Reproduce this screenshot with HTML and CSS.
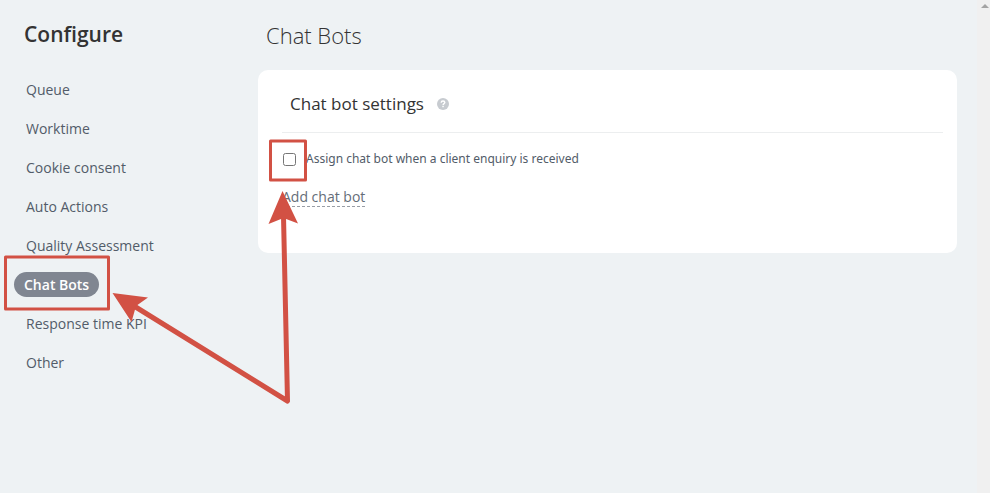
FILE: index.html
```html
<!DOCTYPE html>
<html lang="en">
<head>
<meta charset="utf-8">
<meta name="viewport" content="width=device-width, initial-scale=1">
<title>Configure - Chat Bots</title>
<link rel="stylesheet" href="styles.css">
</head>
<body>
<div class="page">
  <aside class="sidebar">
    <h1 class="sidebar-title">Configure</h1>
    <nav class="menu" aria-label="Configure">
      <a class="menu-item" href="#queue">Queue</a>
      <a class="menu-item" href="#worktime">Worktime</a>
      <a class="menu-item" href="#cookie">Cookie consent</a>
      <a class="menu-item" href="#auto">Auto Actions</a>
      <a class="menu-item" href="#quality">Quality Assessment</a>
      <a class="menu-item menu-item-active" href="#bots" aria-current="page">Chat Bots</a>
      <a class="menu-item" href="#kpi">Response time KPI</a>
      <a class="menu-item" href="#other">Other</a>
    </nav>
  </aside>
  <main class="content">
    <h2 class="content-title">Chat Bots</h2>
    <section class="card">
      <header class="card-header">
        <h3 class="card-title">Chat bot settings</h3>
        <svg class="hint" viewBox="0 0 12 12" aria-hidden="true">
          <circle cx="6" cy="6" r="6" fill="#c7cbd0"/>
          <path d="M4.2 4.7C4.2 3.5 5 3 6 3s1.8.6 1.8 1.6C7.800 5.700 6.100 5.700 6.100 7" fill="none" stroke="#fff" stroke-width="1.400"/>
          <rect x="5.300" y="7.800" width="1.500" height="1.400" fill="#fff"/>
        </svg>
      </header>
      <div class="option">
        <input class="option-box" type="checkbox" id="assign-bot">
        <label class="option-label" for="assign-bot">Assign chat bot when a client enquiry is received</label>
      </div>
      <a class="add-link" href="#add">Add chat bot</a>
    </section>
  </main>
  <div class="scroll-track" aria-hidden="true">
    <svg class="scroll-arrow" viewBox="0 0 8 4"><path d="M0 4L4 0l4 4z" fill="#a3a3a3"/></svg>
  </div>
  <svg class="callouts" viewBox="0 0 320 420" aria-hidden="true">
    <g fill="none" stroke="#d25144" stroke-linejoin="round" stroke-linecap="round">
      <rect x="5.500" y="257" width="103" height="52" stroke-width="3"/>
      <rect x="270.500" y="141" width="35" height="39" stroke-width="3"/>
      <path d="M134 306L287.500 401L283.500 216" stroke-width="5"/>
    </g>
    <path d="M112.500 293L148 297.500L136 306L131.500 322Z" fill="#d25144"/>
    <path d="M282.500 191L298 223.500L283.500 218L268.500 224Z" fill="#d25144"/>
  </svg>
</div>
</body>
</html>
```
FILE: styles.css
```css
* {
  box-sizing: border-box;
}

body {
  margin: 0;
  background: #eef2f4;
  color: #525c69;
  font-family: "Open Sans", "Noto Sans", sans-serif;
  font-size: 14px;
}

h1, h2, h3 {
  margin: 0;
}

.page {
  position: relative;
  display: grid;
  grid-template-columns: 258px minmax(0, 1fr) 13px;
  min-height: 100vh;
}

.sidebar {
  padding: 20px 14px;
}

.sidebar-title {
  padding-left: 10px;
  color: #333;
  font-size: 21px;
  font-weight: 600;
  line-height: 28px;
}

.menu {
  display: flex;
  flex-direction: column;
  align-items: flex-start;
  gap: 14px;
  margin-top: 29px;
}

.menu-item {
  padding: 0 12px;
  color: #525c69;
  line-height: 25px;
  text-decoration: none;
}

.menu-item-active {
  padding: 0 10px;
  border-radius: 13px;
  background: #808691;
  color: #fff;
  font-weight: 600;
}

.content {
  padding: 20px 20px 20px 0;
}

.content-title {
  padding-left: 8px;
  color: #333;
  font-size: 22px;
  font-weight: 300;
  line-height: 30px;
}

.card {
  margin-top: 20px;
  padding: 0 14px 45px 24px;
  border-radius: 10px;
  background: #fff;
}

.card-header {
  display: flex;
  align-items: center;
  gap: 13px;
  height: 63px;
  padding: 5px 8px 0;
  border-bottom: 1px solid #eceeef;
}

.card-title {
  color: #333;
  font-size: 17px;
  font-weight: 400;
  line-height: 24px;
}

.hint {
  width: 12px;
  height: 12px;
}

.option {
  display: flex;
  align-items: center;
  gap: 10px;
  margin: 16px 0 18px;
  line-height: 20px;
}

.option-box {
  width: 13px;
  height: 13px;
  margin: 0 0 0 1px;
}

.option-label {
  font-family: "Noto Sans", "Open Sans", sans-serif;
  font-size: 12px;
}

.add-link {
  display: inline-block;
  margin-bottom: 1px;
  border-bottom: 1px dashed #989da5;
  color: #656d78;
  font-size: 14px;
  line-height: 18px;
  text-decoration: none;
}

.scroll-track {
  background: #f0f0f0;
  padding: 4px 1px 0 4px;
}

.scroll-arrow {
  display: block;
  width: 8px;
  height: 4px;
}

.callouts {
  position: absolute;
  top: 0;
  left: 0;
  width: 320px;
  height: 420px;
  pointer-events: none;
}
```
